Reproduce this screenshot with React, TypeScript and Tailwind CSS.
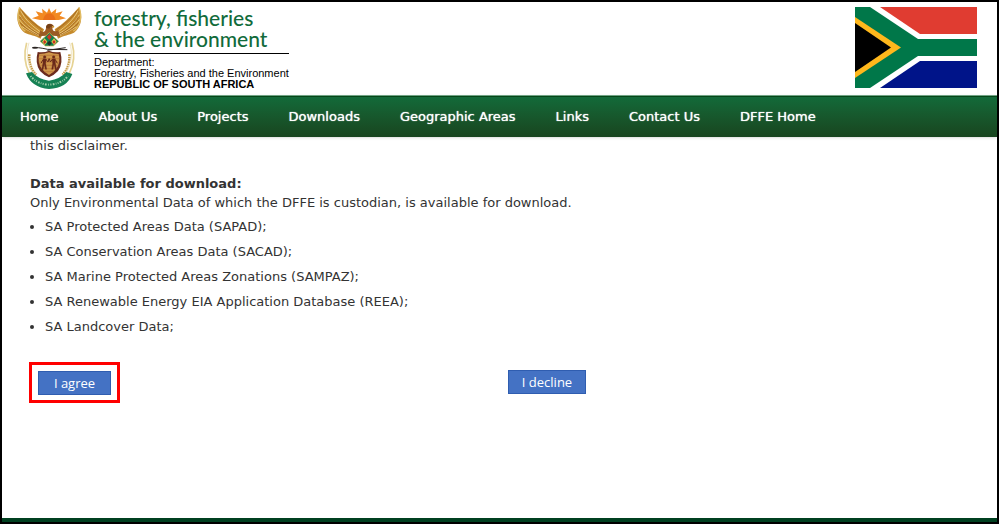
import React from "react";

const navItems = ["Home", "About Us", "Projects", "Downloads", "Geographic Areas", "Links", "Contact Us", "DFFE Home"];

const datasets = [
  "SA Protected Areas Data (SAPAD);",
  "SA Conservation Areas Data (SACAD);",
  "SA Marine Protected Areas Zonations (SAMPAZ);",
  "SA Renewable Energy EIA Application Database (REEA);",
  "SA Landcover Data;",
];

function Wing() {
  return (
    <g>
      <path d="M29 22 C17 48 20 80 44 98 C58 105 76 106 92 116 L102 88 C78 74 56 52 29 22Z" fill="#c58a2c" />
      <path d="M29 22 C19 48 24 78 46 94" fill="none" stroke="#e0bb62" strokeWidth="4" />
      <path d="M32 32 C45 60 70 80 92 96 M28 44 C40 68 62 86 90 101 M28 58 C42 80 66 94 90 107 M37 80 C54 92 70 98 86 108" fill="none" stroke="#f1d58c" strokeWidth="2.5" />
      <path d="M35 32 C52 57 76 74 97 90 M30 50 C44 74 66 89 88 104 M30 68 C44 86 66 96 84 106" fill="none" stroke="#995b1c" strokeWidth="2" />
      <path d="M50 128 C41 160 44 192 58 220" fill="none" stroke="#e6d394" strokeWidth="5" />
      <path d="M58 163 C56 186 62 209 78 224" fill="none" stroke="#c59c48" strokeWidth="8" strokeDasharray="5 2" />
      <path d="M57 128 C48 157 50 190 70 221" fill="none" stroke="#f1e6c5" strokeWidth="3" />
    </g>
  );
}

function Figure() {
  return (
    <g fill="#69291a" stroke="#69291a">
      <circle cx="104" cy="171" r="4" />
      <path d="M99 176 L109 177 L107 190 L110 208 L106 208 L103 193 L99 209 L95 209 L99 188Z" strokeWidth="1" />
      <path d="M99 179 L93 190 M108 178 L114 186 L117 176" fill="none" strokeWidth="3" />
    </g>
  );
}

function CoatOfArms() {
  return (
    <svg viewBox="21 21 198 252" className="h-[84px] w-[66px] shrink-0" role="img" aria-label="South African coat of arms">
      <path d="M117 24 L124 38 L139 26 L137 40 L158 34 L149 47 L168 55 L146 60 L90 60 L66 55 L86 47 L77 34 L98 40 L96 26 L111 38Z" fill="#f28a22" />
      <path d="M99 60 Q104 40 118 40 Q132 40 137 60Z" fill="#e97019" />
      <Wing />
      <g transform="translate(236 0) scale(-1 1)"><Wing /></g>
      <path d="M91 91 Q104 103 108 85 Q108 71 120 71 Q130 72 132 80 L127 83 Q128 99 145 91 L151 110 Q132 105 118 108 Q102 105 85 111Z" fill="#9a5a24" />
      <path d="M108 83 Q108 72 119 72 Q129 73 132 81 L121 80 L118 86Z" fill="#754017" />
      <path d="M124 77 L134 80 L130 84Z" fill="#e9b33e" />
      <path d="M118 98 L146 124 L130 138 L106 138 L90 124Z" fill="#118150" stroke="#d6b34d" strokeWidth="2" />
      <path d="M118 102 L125 111 L118 120 L111 111Z" fill="#cf3526" />
      <path d="M104 115 L112 125 L104 135 L96 125Z M132 115 L140 125 L132 135 L124 125Z" fill="#edc64a" />
      <path d="M104 120 L109 126 L104 132 L99 126Z M132 120 L137 126 L132 132 L127 126Z" fill="#c43125" />
      <path d="M118 122 L125 130 L118 137 L111 130Z" fill="#222f26" />
      <path d="M68 143 Q82 141 113 148 L172 149 M167 143 L112 151" fill="none" stroke="#292321" strokeWidth="3" />
      <ellipse cx="75" cy="143" rx="9" ry="3" fill="#292321" />
      <path d="M83 156 Q102 159 117 152 Q132 159 151 156 Q161 190 144 213 Q132 226 117 232 Q102 226 90 213 Q74 190 83 156Z" fill="#6c2c1e" />
      <path d="M88 162 Q104 162 117 157 Q130 162 146 162 Q153 188 138 207 Q130 218 117 225 Q104 218 96 207 Q81 188 88 162Z" fill="#d0984b" />
      <path d="M88 166 H146 M86 176 H148 M86 186 H148 M89 196 H145 M94 206 H140 M102 215 H132" stroke="#b86f35" strokeWidth="2" />
      <Figure />
      <g transform="translate(235 0) scale(-1 1)"><Figure /></g>
      <path d="M48 220 L66 216 Q83 237 117 242 Q151 237 169 216 L187 222 Q171 265 117 267 Q64 263 48 220Z" fill="#168154" />
      <path d="M62 228 Q80 252 117 254 Q155 252 174 228" fill="none" stroke="#a5d0ac" strokeWidth="6" strokeDasharray="3 4 5 4 2 4" />
    </svg>
  );
}

function Flag() {
  return (
    <svg viewBox="0 0 122 81" className="h-[81px] w-[122px] shrink-0" role="img" aria-label="South African flag">
      <path fill="#fff" d="M0 0H122V81H0Z" />
      <path fill="#e03c31" d="M25 0H122V27H65Z" />
      <path fill="#001489" d="M25 81H122V54H65Z" />
      <path fill="#007749" d="M0 0H15L63 32H122V49H63L15 81H0Z" />
      <path fill="#ffb81c" d="M0 10L46 40.500L0 71Z" />
      <path fill="#000" d="M0 16L36 40.500L0 65Z" />
    </svg>
  );
}

export default function App() {
  return (
    <div className="flex min-h-screen flex-col border-2 border-black bg-white font-['DejaVu_Sans',Verdana,sans-serif] text-[13px] leading-[19px] text-[#333333]">
      <header className="flex items-start justify-between pt-[5px] pr-5 pb-1 pl-[15px]">
        <div className="flex gap-[11px]">
          <CoatOfArms />
          <div className="text-black">
            <div className="border-b border-black pb-1 font-[Lato,sans-serif] text-[21px] leading-[21px] font-medium text-[#116b3b]">
              <p>forestry, fisheries</p>
              <p>&amp; the environment</p>
            </div>
            <p className="pt-[3px] font-['Liberation_Sans',Arial,sans-serif] text-[11px] leading-[11px]">
              Department:
              <br />
              Forestry, Fisheries and the Environment
              <br />
              <strong>REPUBLIC OF SOUTH AFRICA</strong>
            </p>
          </div>
        </div>
        <Flag />
      </header>

      <nav className="relative border-t border-[#70a484] bg-linear-to-b from-[#126b3a] to-[#18451f] shadow-sm">
        <ul className="flex border-t border-[#064719] py-[10px]">
          {navItems.map((item) => (
            <li key={item}>
              <a href="#" className="block pr-[22px] pl-[18px] text-[13px] leading-5 whitespace-nowrap text-white [text-shadow:0_0_1px_#ffffff]">
                {item}
              </a>
            </li>
          ))}
        </ul>
      </nav>

      <main className="-mt-px flex-1 px-7">
        <p>this disclaimer.</p>
        <h2 className="mt-[19px] font-bold">Data available for download:</h2>
        <p>Only Environmental Data of which the DFFE is custodian, is available for download.</p>
        <ul className="mt-[2px] list-disc pl-[15px] leading-[25px]">
          {datasets.map((item) => (
            <li key={item}>{item}</li>
          ))}
        </ul>
        <div className="-ml-px mt-[23px] grid grid-cols-2 items-start font-['Open_Sans',sans-serif] text-[13px] leading-5 text-white">
          <div className="flex">
            <div className="border-3 border-[#ff0000] p-[6px] pb-[5px]">
              <button type="button" className="block h-6 w-[73px] border border-[#2f5db0] bg-[#4472c4] pb-px">I agree</button>
            </div>
          </div>
          <div className="pt-2 pl-[9px]">
            <button type="button" className="block h-6 w-[78px] border border-[#2f5db0] bg-[#4472c4] pb-px">I decline</button>
          </div>
        </div>
      </main>

      <footer className="h-1 bg-[#004020]" />
    </div>
  );
}
